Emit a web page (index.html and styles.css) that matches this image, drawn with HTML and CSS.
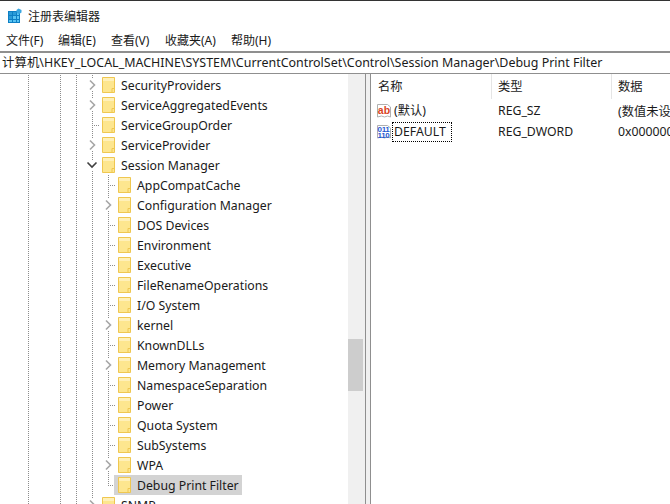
FILE: index.html
```html
<!DOCTYPE html>
<html lang="zh-CN">
<head>
<meta charset="utf-8">
<title>注册表编辑器</title>
<link rel="stylesheet" href="styles.css">
</head>
<body>
<svg class="defs" width="0" height="0">
  <symbol id="folder" viewBox="0 0 13 16">
    <path d="M.5.5h12v15H.5z" fill="#fde68f" stroke="#efc750"/>
    <path d="M1 1h11v3H1z" fill="#fff0b8"/>
    <path d="M10 15.5v-4h2.5" fill="none" stroke="#efc750"/>
  </symbol>
  <symbol id="chev" viewBox="0 0 10 12">
    <path d="M0 0h10v12H0z" fill="#fff"/>
    <path d="M3 1.5 7.5 6 3 10.5" fill="none" stroke="#a6a6a6" stroke-width="1.6"/>
  </symbol>
  <symbol id="down" viewBox="0 0 12 10">
    <path d="M0 0h12v10H0z" fill="#fff"/>
    <path d="M1.5 2.5 6 7l4.5-4.5" fill="none" stroke="#404040" stroke-width="1.6"/>
  </symbol>
</svg>
<div class="window">
  <header class="titlebar">
    <svg class="appicon" width="16" height="16" viewBox="0 0 16 16">
      <path d="M1 3h12v12H1z" fill="#0e7fc4"/>
      <path d="M2 4h3v3H2zM6 4h3v3H6zM2 8h3v3H2z" fill="#2a9bd8"/>
      <path d="M10 4h2v3h-2zM6 8h3v3H6zM10 8h2v3h-2zM2 12h3v2H2zM6 12h3v2H6zM10 12h2v2h-2z" fill="#58c3f2"/>
      <path d="M11.500 0.500l3 1.500v2.500l-2.500 1.500-2.500-1.500V2z" fill="#3aa6e0"/>
    </svg>
    <span>注册表编辑器</span>
  </header>
  <nav class="menubar">
    <span class="m1">文件(F)</span>
    <span class="m2">编辑(E)</span>
    <span class="m3">查看(V)</span>
    <span class="m4">收藏夹(A)</span>
    <span>帮助(H)</span>
  </nav>
  <div class="address">计算机\HKEY_LOCAL_MACHINE\SYSTEM\CurrentControlSet\Control\Session Manager\Debug Print Filter</div>
  <main class="panes">
    <section class="tree">
      <div class="row"><i class="g"></i><i class="e"></i><i class="g"></i><i class="g8"></i><i class="tw line"><svg class="chev" width="10" height="12"><use href="#chev"/></svg></i><svg class="fd" width="13" height="16"><use href="#folder"/></svg><span class="lb">SecurityProviders</span></div>
      <div class="row"><i class="g"></i><i class="e"></i><i class="g"></i><i class="g8"></i><i class="tw line"><svg class="chev" width="10" height="12"><use href="#chev"/></svg></i><svg class="fd" width="13" height="16"><use href="#folder"/></svg><span class="lb">ServiceAggregatedEvents</span></div>
      <div class="row"><i class="g"></i><i class="e"></i><i class="g"></i><i class="g8"></i><i class="tw tee"></i><svg class="fd" width="13" height="16"><use href="#folder"/></svg><span class="lb">ServiceGroupOrder</span></div>
      <div class="row"><i class="g"></i><i class="e"></i><i class="g"></i><i class="g8"></i><i class="tw line"><svg class="chev" width="10" height="12"><use href="#chev"/></svg></i><svg class="fd" width="13" height="16"><use href="#folder"/></svg><span class="lb">ServiceProvider</span></div>
      <div class="row"><i class="g"></i><i class="e"></i><i class="g"></i><i class="g8"></i><i class="tw line"><svg class="chev" width="12" height="10"><use href="#down"/></svg></i><svg class="fd" width="13" height="16"><use href="#folder"/></svg><span class="lb">Session Manager</span></div>
      <div class="row"><i class="g"></i><i class="e"></i><i class="g"></i><i class="g"></i><i class="g8"></i><i class="tw tee"></i><svg class="fd" width="13" height="16"><use href="#folder"/></svg><span class="lb">AppCompatCache</span></div>
      <div class="row"><i class="g"></i><i class="e"></i><i class="g"></i><i class="g"></i><i class="g8"></i><i class="tw line"><svg class="chev" width="10" height="12"><use href="#chev"/></svg></i><svg class="fd" width="13" height="16"><use href="#folder"/></svg><span class="lb">Configuration Manager</span></div>
      <div class="row"><i class="g"></i><i class="e"></i><i class="g"></i><i class="g"></i><i class="g8"></i><i class="tw tee"></i><svg class="fd" width="13" height="16"><use href="#folder"/></svg><span class="lb">DOS Devices</span></div>
      <div class="row"><i class="g"></i><i class="e"></i><i class="g"></i><i class="g"></i><i class="g8"></i><i class="tw tee"></i><svg class="fd" width="13" height="16"><use href="#folder"/></svg><span class="lb">Environment</span></div>
      <div class="row"><i class="g"></i><i class="e"></i><i class="g"></i><i class="g"></i><i class="g8"></i><i class="tw tee"></i><svg class="fd" width="13" height="16"><use href="#folder"/></svg><span class="lb">Executive</span></div>
      <div class="row"><i class="g"></i><i class="e"></i><i class="g"></i><i class="g"></i><i class="g8"></i><i class="tw tee"></i><svg class="fd" width="13" height="16"><use href="#folder"/></svg><span class="lb">FileRenameOperations</span></div>
      <div class="row"><i class="g"></i><i class="e"></i><i class="g"></i><i class="g"></i><i class="g8"></i><i class="tw tee"></i><svg class="fd" width="13" height="16"><use href="#folder"/></svg><span class="lb">I/O System</span></div>
      <div class="row"><i class="g"></i><i class="e"></i><i class="g"></i><i class="g"></i><i class="g8"></i><i class="tw line"><svg class="chev" width="10" height="12"><use href="#chev"/></svg></i><svg class="fd" width="13" height="16"><use href="#folder"/></svg><span class="lb">kernel</span></div>
      <div class="row"><i class="g"></i><i class="e"></i><i class="g"></i><i class="g"></i><i class="g8"></i><i class="tw tee"></i><svg class="fd" width="13" height="16"><use href="#folder"/></svg><span class="lb">KnownDLLs</span></div>
      <div class="row"><i class="g"></i><i class="e"></i><i class="g"></i><i class="g"></i><i class="g8"></i><i class="tw line"><svg class="chev" width="10" height="12"><use href="#chev"/></svg></i><svg class="fd" width="13" height="16"><use href="#folder"/></svg><span class="lb">Memory Management</span></div>
      <div class="row"><i class="g"></i><i class="e"></i><i class="g"></i><i class="g"></i><i class="g8"></i><i class="tw tee"></i><svg class="fd" width="13" height="16"><use href="#folder"/></svg><span class="lb">NamespaceSeparation</span></div>
      <div class="row"><i class="g"></i><i class="e"></i><i class="g"></i><i class="g"></i><i class="g8"></i><i class="tw tee"></i><svg class="fd" width="13" height="16"><use href="#folder"/></svg><span class="lb">Power</span></div>
      <div class="row"><i class="g"></i><i class="e"></i><i class="g"></i><i class="g"></i><i class="g8"></i><i class="tw tee"></i><svg class="fd" width="13" height="16"><use href="#folder"/></svg><span class="lb">Quota System</span></div>
      <div class="row"><i class="g"></i><i class="e"></i><i class="g"></i><i class="g"></i><i class="g8"></i><i class="tw tee"></i><svg class="fd" width="13" height="16"><use href="#folder"/></svg><span class="lb">SubSystems</span></div>
      <div class="row"><i class="g"></i><i class="e"></i><i class="g"></i><i class="g"></i><i class="g8"></i><i class="tw line"><svg class="chev" width="10" height="12"><use href="#chev"/></svg></i><svg class="fd" width="13" height="16"><use href="#folder"/></svg><span class="lb">WPA</span></div>
      <div class="row"><i class="g"></i><i class="e"></i><i class="g"></i><i class="g"></i><i class="g8"></i><i class="tw ell"></i><span class="sel"><svg class="fd" width="13" height="16"><use href="#folder"/></svg><span class="lb">Debug Print Filter</span></span></div>
      <div class="row"><i class="g"></i><i class="e"></i><i class="g"></i><i class="g8"></i><i class="tw line"><svg class="chev" width="10" height="12"><use href="#chev"/></svg></i><svg class="fd" width="13" height="16"><use href="#folder"/></svg><span class="lb">SNMP</span></div>
    </section>
    <aside class="scrollbar"><div class="thumb"></div></aside>
    <div class="splitter"></div>
    <section class="list">
      <div class="lhead">
        <span class="c1">名称</span>
        <span class="c2">类型</span>
        <span class="c3">数据</span>
      </div>
      <div class="lrow">
        <span class="c1 name">
          <svg class="ricon" width="16" height="16" viewBox="0 0 16 16">
            <path d="M1.500 1.500h10l3 2.500v10l-3-1-3 1-3-1-4 1z" fill="#fff" stroke="#b0b0b0"/>
            <text x="1.800" y="10.500" class="abtext">ab</text>
          </svg>
          <span class="nm">(默认)</span>
        </span>
        <span class="c2">REG_SZ</span>
        <span class="c3">(数值未设置)</span>
      </div>
      <div class="lrow">
        <span class="c1 name">
          <svg class="ricon" width="16" height="16" viewBox="0 0 16 16">
            <path d="M1.500 1.500h10l3 2.500v10l-3-1-3 1-3-1-4 1z" fill="#fff" stroke="#b0b0b0"/>
            <text x="1.500" y="7.500" class="bintext">011</text>
            <text x="1.500" y="14" class="bintext">110</text>
          </svg>
          <span class="nm focus">DEFAULT</span>
        </span>
        <span class="c2">REG_DWORD</span>
        <span class="c3">0x00000000 (0)</span>
      </div>
    </section>
  </main>
</div>
</body>
</html>
```
FILE: styles.css
```css
* { box-sizing: border-box; }
html, body { margin: 0; height: 100%; overflow: hidden; background: #fff; }
body {
  font-family: "Noto Sans", "Noto Sans CJK SC", sans-serif;
  font-size: 12px;
  color: #1a1a1a;
}
.defs { position: absolute; }
.window { display: flex; flex-direction: column; height: 504px; width: 670px; overflow: hidden; border-top: 1px solid #333; }
.titlebar { height: 28px; display: flex; align-items: center; gap: 5px; padding: 2px 0 0 7px; font-size: 12px; }
.appicon { flex: none; }
.menubar { height: 22px; display: flex; align-items: center; padding-left: 6px; font-size: 12px; }
.menubar span { white-space: nowrap; }
.m1 { width: 52px; }
.m2 { width: 53px; }
.m3 { width: 54px; }
.m4 { width: 66px; }
.address {
  height: 23px;
  border-top: 2px solid #8f8f8f;
  border-bottom: 1px solid #8f8f8f;
  padding-left: 2px;
  line-height: 19px;
  font-size: 12.440px;
  white-space: nowrap;
  overflow: hidden;
}
.panes { flex: 1; display: flex; min-height: 0; }
.tree { width: 348px; flex: none; overflow: hidden; padding-top: 1px; }
.row { height: 20px; display: flex; align-items: center; padding-left: 28px; }
.row i { display: block; flex: none; height: 20px; }
.g, .g8 { background: repeating-linear-gradient(#8c8c8c 0 1px, transparent 1px 2px) 0 0 / 1px 100% no-repeat; }
.g { width: 16px; }
.e { width: 16px; }
.g8 { width: 8px; }
.row .tw { width: 16px; position: relative; display: flex; align-items: center; justify-content: center; }
.line { background: repeating-linear-gradient(#8c8c8c 0 1px, transparent 1px 2px) 8px 0 / 1px 100% no-repeat; }
.tee {
  background:
    repeating-linear-gradient(#8c8c8c 0 1px, transparent 1px 2px) 8px 0 / 1px 100% no-repeat,
    repeating-linear-gradient(90deg, #8c8c8c 0 1px, transparent 1px 2px) 8px 10px / 8px 1px no-repeat;
}
.ell {
  background:
    repeating-linear-gradient(#8c8c8c 0 1px, transparent 1px 2px) 8px 0 / 1px 11px no-repeat,
    repeating-linear-gradient(90deg, #8c8c8c 0 1px, transparent 1px 2px) 8px 10px / 6px 1px no-repeat;
}
.fd { flex: none; margin-left: 2px; }
.lb { margin-left: 6px; white-space: nowrap; font-size: 12.280px; }
.sel { display: flex; align-items: center; height: 20px; width: 128px; margin-left: -2px; background: #d3d3d3; }
.sel .fd { margin-left: 4px; }
.scrollbar { width: 17px; flex: none; background: #f0f0f0; }
.thumb { width: 15px; height: 52px; margin-top: 265px; background: #cdcdcd; }
.splitter { width: 6px; flex: none; background: #f0f0f0; border-left: 1px solid #8f8f8f; border-right: 1px solid #8f8f8f; }
.list { flex: 1; min-width: 0; overflow: hidden; font-size: 12.280px; }
.lhead { height: 26px; display: flex; align-items: flex-start; }
.lhead span { flex: none; border-left: 1px solid #e5e5e5; height: 25px; display: flex; align-items: center; padding: 0 0 1px 6px; }
.lhead .c1 { border-left: none; width: 120px; padding-left: 7px; }
.lhead .c2 { width: 120px; }
.lrow { height: 20px; display: flex; align-items: center; white-space: nowrap; width: 400px; margin-top: 1px; }
.lrow .c1 { flex: none; width: 121px; padding-left: 5px; display: flex; align-items: center; }
.lrow .c2 { flex: none; width: 120px; padding: 0 0 1px 6px; }
.lrow .c3 { flex: none; padding: 0 0 1px 6px; }
.ricon { flex: none; }
.nm { margin-left: 1px; height: 20px; line-height: 20px; padding: 0 1px; }
.focus { border: 1px dotted #000; width: 60px; line-height: 18px; margin-left: 0; }
.abtext { font: bold 10.500px "Liberation Sans", sans-serif; fill: #d9441f; }
.bintext { font: bold 8px "Liberation Sans", sans-serif; fill: #1f5ad0; letter-spacing: -0.300px; }
```
